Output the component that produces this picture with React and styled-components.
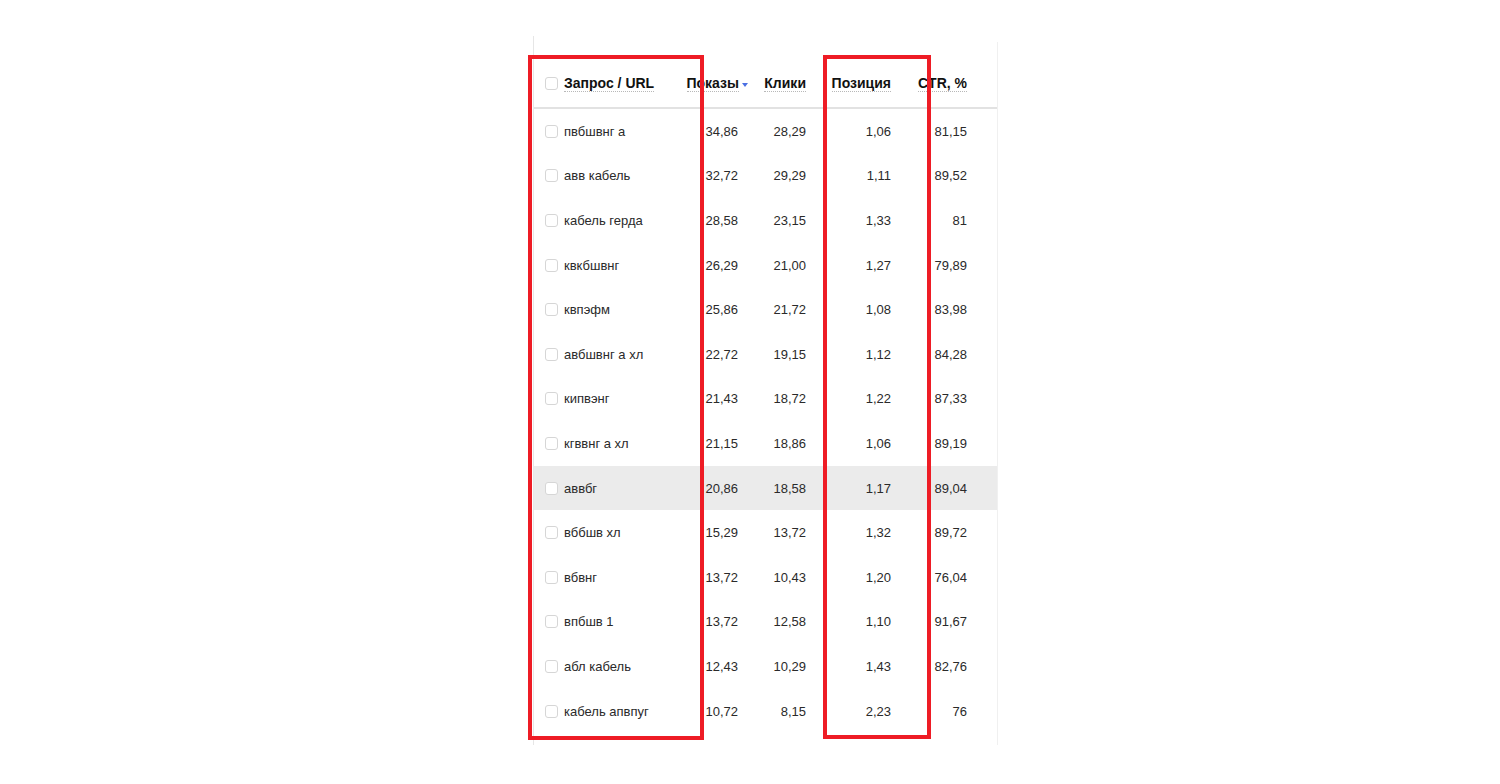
import React from 'react';
import styled, { createGlobalStyle } from 'styled-components';

const GlobalStyle = createGlobalStyle`
  html, body {
    margin: 0;
    background: #ffffff;
    font-family: "Liberation Sans", Arial, sans-serif;
  }
`;

const Page = styled.div`
  position: relative;
  width: 1500px;
  height: 784px;
  padding: 36px 0 0 533px;
  box-sizing: border-box;
  overflow: hidden;
`;

const Frame = styled.div`
  width: 464px;
  border-left: 1px solid #e6e6e6;
  padding-top: 6px;
`;

const Panel = styled.div`
  border-right: 1px solid #f0f0f0;
  padding-top: 18px;
  padding-bottom: 12px;
`;

const Grid = styled.div`
  display: grid;
  grid-template-columns: 147px 67px 58px 85px 76px 31px;
  align-items: center;
  height: ${p => p.$h}px;
  background: ${p => (p.$active ? '#ebebeb' : 'transparent')};
  border-bottom: ${p => (p.$head ? '2px solid #e2e2e2' : 'none')};
  box-sizing: border-box;
  font-size: 13px;
  color: #2a2a2a;
`;

const First = styled.div`
  display: flex;
  align-items: center;
  gap: 6px;
  padding-left: 11px;
  white-space: nowrap;
`;

const Check = styled.span`
  width: 13px;
  height: 13px;
  border: 1px solid #d6d6d6;
  border-radius: 3px;
  box-sizing: border-box;
  background: #fff;
  flex: none;
`;

const Num = styled.div`
  text-align: right;
  padding-right: ${p => p.$pad || 0}px;
  white-space: nowrap;
`;

const HeadCell = styled.div`
  display: flex;
  justify-content: flex-end;
  align-items: center;
  white-space: nowrap;
`;

const HeadText = styled.span`
  font-size: 14px;
  font-weight: bold;
  color: #111;
  border-bottom: 1px dotted #b8b8b8;
  line-height: 16px;
`;

const SortArrow = styled.span`
  width: 0;
  height: 0;
  margin-left: 3px;
  margin-top: 2px;
  border-left: 3.5px solid transparent;
  border-right: 3.5px solid transparent;
  border-top: 4px solid #4a6fe3;
`;

const Mark = styled.div`
  position: absolute;
  border: 4px solid #ee1c25;
  box-sizing: border-box;
  pointer-events: none;
`;

const rows = [
  ['пвбшвнг а', '34,86', '28,29', '1,06', '81,15'],
  ['авв кабель', '32,72', '29,29', '1,11', '89,52'],
  ['кабель герда', '28,58', '23,15', '1,33', '81'],
  ['квкбшвнг', '26,29', '21,00', '1,27', '79,89'],
  ['квпэфм', '25,86', '21,72', '1,08', '83,98'],
  ['авбшвнг а хл', '22,72', '19,15', '1,12', '84,28'],
  ['кипвэнг', '21,43', '18,72', '1,22', '87,33'],
  ['кгввнг а хл', '21,15', '18,86', '1,06', '89,19'],
  ['аввбг', '20,86', '18,58', '1,17', '89,04'],
  ['вббшв хл', '15,29', '13,72', '1,32', '89,72'],
  ['вбвнг', '13,72', '10,43', '1,20', '76,04'],
  ['впбшв 1', '13,72', '12,58', '1,10', '91,67'],
  ['абл кабель', '12,43', '10,29', '1,43', '82,76'],
  ['кабель апвпуг', '10,72', '8,15', '2,23', '76'],
];

export default function App() {
  return (
    <>
      <GlobalStyle />
      <Page>
        <Frame>
          <Panel>
            <Grid $head $h={49}>
              <First>
                <Check />
                <HeadText>Запрос / URL</HeadText>
              </First>
              <HeadCell>
                <HeadText>Показы</HeadText>
                <SortArrow />
              </HeadCell>
              <HeadCell><HeadText>Клики</HeadText></HeadCell>
              <HeadCell><HeadText>Позиция</HeadText></HeadCell>
              <HeadCell><HeadText>CTR, %</HeadText></HeadCell>
              <div />
            </Grid>
            {rows.map((r, i) => (
              <Grid key={r[0]} $h={44.6} $active={i === 8}>
                <First>
                  <Check />
                  <span>{r[0]}</span>
                </First>
                <Num $pad={10}>{r[1]}</Num>
                <Num>{r[2]}</Num>
                <Num>{r[3]}</Num>
                <Num>{r[4]}</Num>
                <div />
              </Grid>
            ))}
          </Panel>
        </Frame>
        <Mark style={{ left: 528, top: 55, width: 176, height: 685 }} />
        <Mark style={{ left: 823, top: 55, width: 108, height: 684 }} />
      </Page>
    </>
  );
}
